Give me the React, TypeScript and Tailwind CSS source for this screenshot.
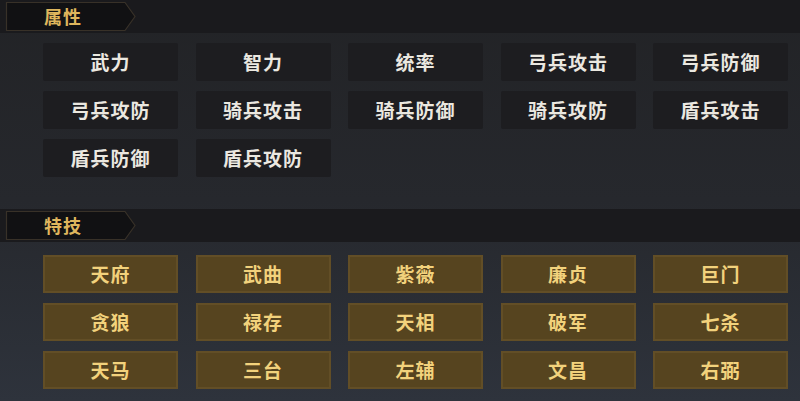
const attrs = [
  "武力", "智力", "统率", "弓兵攻击", "弓兵防御",
  "弓兵攻防", "骑兵攻击", "骑兵防御", "骑兵攻防", "盾兵攻击",
  "盾兵防御", "盾兵攻防",
];

const skills = [
  "天府", "武曲", "紫薇", "廉贞", "巨门",
  "贪狼", "禄存", "天相", "破军", "七杀",
  "天马", "三台", "左辅", "文昌", "右弼",
];

const cjk = "font-['Noto_Sans_CJK_SC',sans-serif]";

function SectionHeader({ title }: { title: string }) {
  return (
    <div className="flex h-[33px] items-center bg-[#1a1a1d] pl-[5px]">
      <div className="relative flex h-[31px] w-[132px] items-center pl-[39px]">
        {/* tab shape with thin bronze rim */}
        <svg className="absolute inset-0" width="132" height="31" viewBox="0 0 132 31">
          <path
            d="M1.5 1.5 H120 L130 15.5 L120 29.5 H1.5 Z"
            fill="#111113"
            stroke="#383128"
            strokeWidth="1.2"
          />
        </svg>
        <span className={`relative ${cjk} text-[18px] font-bold tracking-[1px] text-[#dfb65d]`}>
          {title}
        </span>
      </div>
    </div>
  );
}

export default function App() {
  return (
    <div className="h-[401px] w-[800px] overflow-hidden bg-gradient-to-b from-[#222326] via-[#26282d] to-[#2e333c]">
      <SectionHeader title="属性" />

      <div className="ml-[43px] mt-[10px] grid w-[745px] grid-cols-5 gap-x-[17.5px] gap-y-[10px]">
        {attrs.map((a) => (
          <div
            key={a}
            className={`flex h-[38px] items-center justify-center rounded-[2px] bg-[#1d1d20] ${cjk} text-[19px] font-bold tracking-[1px] text-[#ebe8e0]`}
          >
            {a}
          </div>
        ))}
      </div>

      <div className="mt-[32px]">
        <SectionHeader title="特技" />
      </div>

      <div className="ml-[43px] mt-[13px] grid w-[745px] grid-cols-5 gap-x-[17.5px] gap-y-[10px]">
        {skills.map((s) => (
          <div
            key={s}
            className={`flex h-[38px] items-center justify-center border-2 border-[#624e26] bg-[#56441f] ${cjk} text-[19px] font-bold tracking-[1px] text-[#f2d27c]`}
          >
            {s}
          </div>
        ))}
      </div>
    </div>
  );
}
